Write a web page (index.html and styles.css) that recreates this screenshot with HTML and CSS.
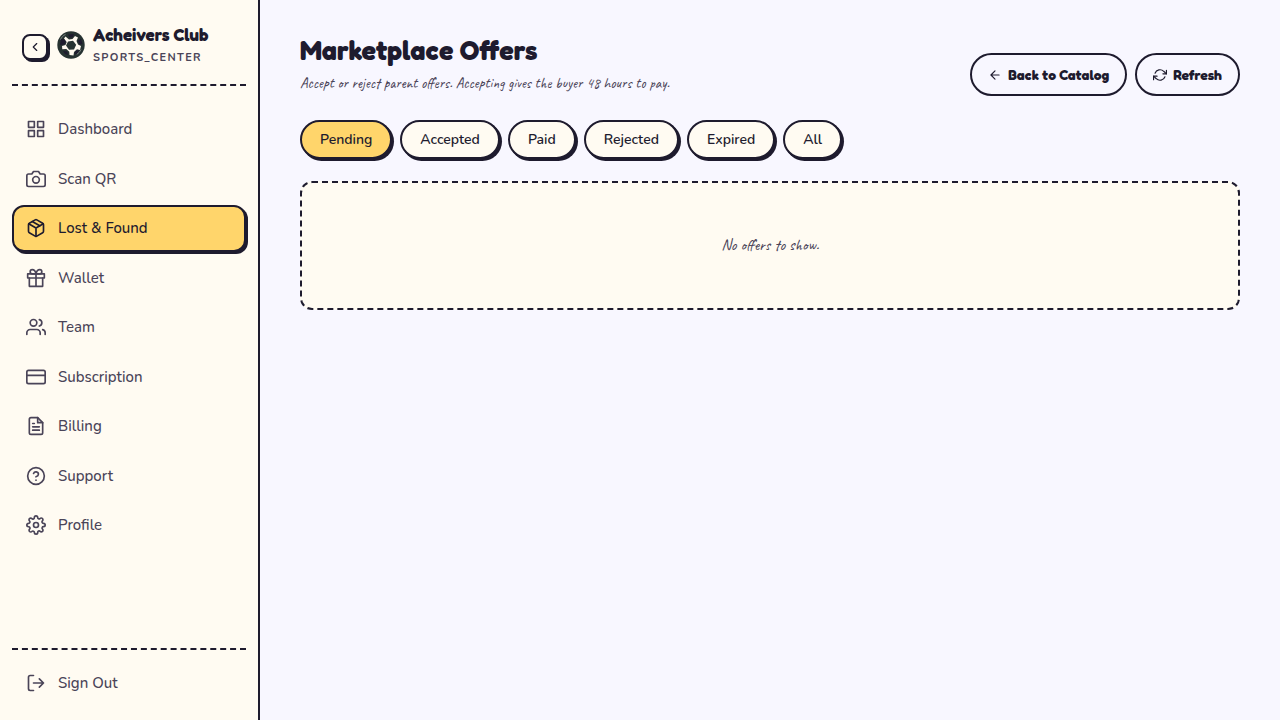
FILE: index.html
```html
<!DOCTYPE html>
<html lang="en">
<head>
    <meta charset="UTF-8">
    <meta name="viewport" content="width=device-width, initial-scale=1.0">
    <title>Marketplace Offers</title>
    <link rel="stylesheet" href="styles.css">
</head>
<body>
    <div class="app">
        <aside class="sidebar">
            <div class="sidebar-header">
                <button class="collapse-btn" type="button" aria-label="Collapse sidebar">
                    <svg class="icon" viewBox="0 0 24 24"><path d="m15 18-6-6 6-6"/></svg>
                </button>
                <div class="brand">
                    <svg class="brand-logo" viewBox="0 0 28 28" aria-hidden="true">
                        <circle cx="14" cy="14" r="13.7" fill="#263231"/>
                        <path d="M8.500 5.500l3.500 3 3.500-.5 2.500-3 3 1.500-1.500 3.500 1.500 3.500 3 1.500-1 4-3-.8-3 2.800-.5 3.500-4-.5-.2-3.200-3-2.800-4 .3-.3-3.400 3.500-.8 1.200-3L7 7.500z" fill="#fffaf0"/>
                        <path d="m11 10.500 5-.8 3.200 4-2.200 4.800-5 .3-3-4.300z" fill="#263231"/>
                        <path d="M4 8l3.500.5 1.300 2.300-1.500 2.700L3 14zM11 3.500l6-.5-1.500 3.200-3 .6zM21 9.500l3-1.500 1.500 5-3 .5zM18.500 20l3.500-1-1.500 3.500-3 1zM6 20l4 .5 1 3.500-3-1z" fill="#1e1b2e"/>
                        <path d="M3.500 8.500C4.500 6.300 6.300 4.500 8.500 3.400M24 18.500c-.9 2-2.300 3.700-4.200 4.800" fill="none" stroke="#8d9692" stroke-width=".8"/>
                    </svg>
                    <div class="brand-text">
                        <span class="brand-name">Acheivers Club</span>
                        <span class="brand-role">SPORTS_CENTER</span>
                    </div>
                </div>
            </div>

            <nav class="nav">
                <a class="nav-item" href="#">
                    <svg class="icon" viewBox="0 0 24 24"><rect x="3" y="3" width="7" height="7"/><rect x="14" y="3" width="7" height="7"/><rect x="14" y="14" width="7" height="7"/><rect x="3" y="14" width="7" height="7"/></svg>
                    <span>Dashboard</span>
                </a>
                <a class="nav-item" href="#">
                    <svg class="icon" viewBox="0 0 24 24"><path d="M23 19a2 2 0 0 1-2 2H3a2 2 0 0 1-2-2V8a2 2 0 0 1 2-2h4l2-3h6l2 3h4a2 2 0 0 1 2 2z"/><circle cx="12" cy="13" r="4"/></svg>
                    <span>Scan QR</span>
                </a>
                <a class="nav-item active" href="#" aria-current="page">
                    <svg class="icon" viewBox="0 0 24 24"><path d="m16.500 9.400-9-5.190"/><path d="M21 16V8a2 2 0 0 0-1-1.730l-7-4a2 2 0 0 0-2 0l-7 4A2 2 0 0 0 3 8v8a2 2 0 0 0 1 1.730l7 4a2 2 0 0 0 2 0l7-4A2 2 0 0 0 21 16z"/><path d="M3.270 6.960 12 12.010l8.730-5.050M12 22.080V12"/></svg>
                    <span>Lost &amp; Found</span>
                </a>
                <a class="nav-item" href="#">
                    <svg class="icon" viewBox="0 0 24 24"><rect x="2" y="7" width="20" height="5"/><path d="M20 12v10H4V12M12 22V7M12 7H7.500a2.500 2.500 0 0 1 0-5C11 2 12 7 12 7zM12 7h4.500a2.500 2.500 0 0 0 0-5C13 2 12 7 12 7z"/></svg>
                    <span>Wallet</span>
                </a>
                <a class="nav-item" href="#">
                    <svg class="icon" viewBox="0 0 24 24"><path d="M17 21v-2a4 4 0 0 0-4-4H5a4 4 0 0 0-4 4v2"/><circle cx="9" cy="7" r="4"/><path d="M23 21v-2a4 4 0 0 0-3-3.870M16 3.130a4 4 0 0 1 0 7.750"/></svg>
                    <span>Team</span>
                </a>
                <a class="nav-item" href="#">
                    <svg class="icon" viewBox="0 0 24 24"><rect x="1" y="4" width="22" height="16" rx="2"/><path d="M1 10h22"/></svg>
                    <span>Subscription</span>
                </a>
                <a class="nav-item" href="#">
                    <svg class="icon" viewBox="0 0 24 24"><path d="M14 2H6a2 2 0 0 0-2 2v16a2 2 0 0 0 2 2h12a2 2 0 0 0 2-2V8z"/><path d="M14 2v6h6M16 13H8M16 17H8M10 9H8"/></svg>
                    <span>Billing</span>
                </a>
                <a class="nav-item" href="#">
                    <svg class="icon" viewBox="0 0 24 24"><circle cx="12" cy="12" r="10"/><path d="M9.090 9a3 3 0 0 1 5.830 1c0 2-3 3-3 3M12 17h.01"/></svg>
                    <span>Support</span>
                </a>
                <a class="nav-item" href="#">
                    <svg class="icon" viewBox="0 0 24 24"><circle cx="12" cy="12" r="3"/><path d="M19.400 15a1.650 1.650 0 0 0 .33 1.820l.06.06a2 2 0 0 1 0 2.830 2 2 0 0 1-2.830 0l-.06-.06a1.650 1.650 0 0 0-1.820-.33 1.650 1.650 0 0 0-1 1.510V21a2 2 0 0 1-2 2 2 2 0 0 1-2-2v-.09A1.650 1.650 0 0 0 9 19.400a1.650 1.650 0 0 0-1.820.33l-.06.06a2 2 0 0 1-2.830 0 2 2 0 0 1 0-2.830l.06-.06a1.650 1.650 0 0 0 .33-1.820 1.650 1.650 0 0 0-1.510-1H3a2 2 0 0 1-2-2 2 2 0 0 1 2-2h.09A1.650 1.650 0 0 0 4.600 9a1.650 1.650 0 0 0-.33-1.820l-.06-.06a2 2 0 0 1 0-2.830 2 2 0 0 1 2.830 0l.06.06a1.650 1.650 0 0 0 1.820.33H9a1.650 1.650 0 0 0 1-1.510V3a2 2 0 0 1 2-2 2 2 0 0 1 2 2v.09a1.650 1.650 0 0 0 1 1.510 1.650 1.650 0 0 0 1.820-.33l.06-.06a2 2 0 0 1 2.830 0 2 2 0 0 1 0 2.830l-.06.06a1.650 1.650 0 0 0-.33 1.820V9a1.650 1.650 0 0 0 1.510 1H21a2 2 0 0 1 2 2 2 2 0 0 1-2 2h-.09a1.650 1.650 0 0 0-1.510 1z"/></svg>
                    <span>Profile</span>
                </a>
            </nav>

            <div class="sidebar-footer">
                <button class="nav-item" type="button">
                    <svg class="icon" viewBox="0 0 24 24"><path d="M9 21H5a2 2 0 0 1-2-2V5a2 2 0 0 1 2-2h4M16 17l5-5-5-5M21 12H9"/></svg>
                    <span>Sign Out</span>
                </button>
            </div>
        </aside>

        <main class="main">
            <header class="page-header">
                <div class="page-heading">
                    <h1>Marketplace Offers</h1>
                    <p>Accept or reject parent offers. Accepting gives the buyer 48 hours to pay.</p>
                </div>
                <div class="actions">
                    <a class="btn" href="#">
                        <svg class="icon" viewBox="0 0 24 24"><path d="M19 12H5M12 19l-7-7 7-7"/></svg>
                        Back to Catalog
                    </a>
                    <button class="btn" type="button">
                        <svg class="icon" viewBox="0 0 24 24"><path d="M23 4v6h-6M1 20v-6h6"/><path d="M3.510 9a9 9 0 0 1 14.850-3.360L23 10M1 14l4.640 4.360A9 9 0 0 0 20.490 15"/></svg>
                        Refresh
                    </button>
                </div>
            </header>

            <div class="filters">
                <button class="chip selected" type="button">Pending</button>
                <button class="chip" type="button">Accepted</button>
                <button class="chip" type="button">Paid</button>
                <button class="chip" type="button">Rejected</button>
                <button class="chip" type="button">Expired</button>
                <button class="chip" type="button">All</button>
            </div>

            <section class="empty">
                <p>No offers to show.</p>
            </section>
        </main>
    </div>
</body>
</html>
```
FILE: styles.css
```css
:root {
    --ink: #1e1b2e;
    --ink-soft: #4a4458;
    --cream: #fffbf2;
    --lavender: #f8f7ff;
    --yellow: #ffd56b;
    --font-body: Nunito, Lato, sans-serif;
    --font-display: "Fredoka One", Fredoka, Inter, sans-serif;
    --font-hand: Caveat, Lato, sans-serif;
}

* {
    box-sizing: border-box;
}

body {
    margin: 0;
    background: var(--lavender);
    color: var(--ink);
    font-family: var(--font-body);
    font-size: 15px;
    line-height: 1.5;
}

h1, p {
    margin: 0;
}

a {
    color: inherit;
    text-decoration: none;
}

button {
    font: inherit;
    color: inherit;
    cursor: pointer;
}

.icon {
    flex: none;
    width: 20px;
    height: 20px;
    fill: none;
    stroke: currentColor;
    stroke-width: 2;
    stroke-linecap: round;
    stroke-linejoin: round;
}

.app {
    display: flex;
    min-height: 100vh;
}

/* Sidebar */
.sidebar {
    display: flex;
    flex-direction: column;
    flex: none;
    width: 260px;
    padding: 23px 12px 14px;
    background: var(--cream);
    border-right: 2px solid var(--ink);
}

.sidebar-header {
    display: flex;
    align-items: center;
    gap: 9px;
    padding: 0 10px 13px;
    border-bottom: 2px dashed var(--ink);
}

.collapse-btn {
    display: flex;
    align-items: center;
    justify-content: center;
    width: 26px;
    height: 26px;
    padding: 0;
    background: var(--cream);
    border: 2px solid var(--ink);
    border-radius: 8px;
    box-shadow: 2px 2px 0 var(--ink);
}

.collapse-btn .icon {
    width: 14px;
    height: 14px;
}

.brand {
    display: flex;
    align-items: center;
    gap: 8px;
    padding-bottom: 4px;
}

.brand-logo {
    flex: none;
    width: 28px;
    height: 28px;
}

.brand-text {
    display: flex;
    flex-direction: column;
    gap: 2px;
}

.brand-name {
    font-family: var(--font-display);
    font-size: 17px;
    font-weight: 700;
    line-height: 24px;
    white-space: nowrap;
}

.brand-role {
    color: var(--ink-soft);
    font-size: 11px;
    font-weight: 700;
    line-height: 18px;
    letter-spacing: 0.12em;
}

.nav {
    display: flex;
    flex-direction: column;
    flex: 1;
    gap: 3px;
    padding: 20px 0;
}

.nav-item {
    display: flex;
    align-items: center;
    gap: 12px;
    width: 100%;
    padding: 10px 12px;
    background: none;
    border: 2px solid transparent;
    border-radius: 12px;
    color: var(--ink-soft);
    font-weight: 500;
    text-align: left;
}

.nav-item.active {
    background: var(--yellow);
    border-color: var(--ink);
    box-shadow: 2px 2px 0 var(--ink);
    color: var(--ink);
}

.sidebar-footer {
    padding-top: 10px;
    border-top: 2px dashed var(--ink);
}

/* Page */
.main {
    flex: 1;
    min-width: 0;
    padding: 32px 40px;
}

.page-header {
    display: flex;
    align-items: flex-end;
    justify-content: space-between;
    gap: 16px;
    margin-bottom: 24px;
}

.page-heading h1 {
    font-family: var(--font-display);
    font-size: 27px;
    font-weight: 700;
    line-height: 36px;
}

.page-heading p {
    padding: 6px 0 2px;
    color: var(--ink-soft);
    font-family: var(--font-hand);
    font-size: 15px;
    line-height: 20px;
}

.actions {
    display: flex;
    gap: 8px;
}

.btn {
    display: flex;
    align-items: center;
    gap: 6px;
    padding: 9px 16px;
    background: transparent;
    border: 2px solid var(--ink);
    border-radius: 999px;
    font-family: var(--font-display);
    font-size: 14px;
    font-weight: 700;
    line-height: 21px;
    white-space: nowrap;
}

.btn .icon {
    width: 14px;
    height: 14px;
}

.filters {
    display: flex;
    flex-wrap: wrap;
    gap: 8px;
    margin-bottom: 22px;
}

.chip {
    padding: 8px 18px;
    background: var(--cream);
    border: 2px solid var(--ink);
    border-radius: 999px;
    box-shadow: 2px 2px 0 var(--ink);
    font-size: 14px;
    font-weight: 600;
    line-height: 19px;
}

.chip.selected {
    background: var(--yellow);
}

.empty {
    padding: 52px 24px;
    background: var(--cream);
    border: 2px dashed var(--ink);
    border-radius: 12px;
    color: var(--ink-soft);
    font-family: var(--font-hand);
    font-size: 16px;
    line-height: 21px;
    text-align: center;
}
```
